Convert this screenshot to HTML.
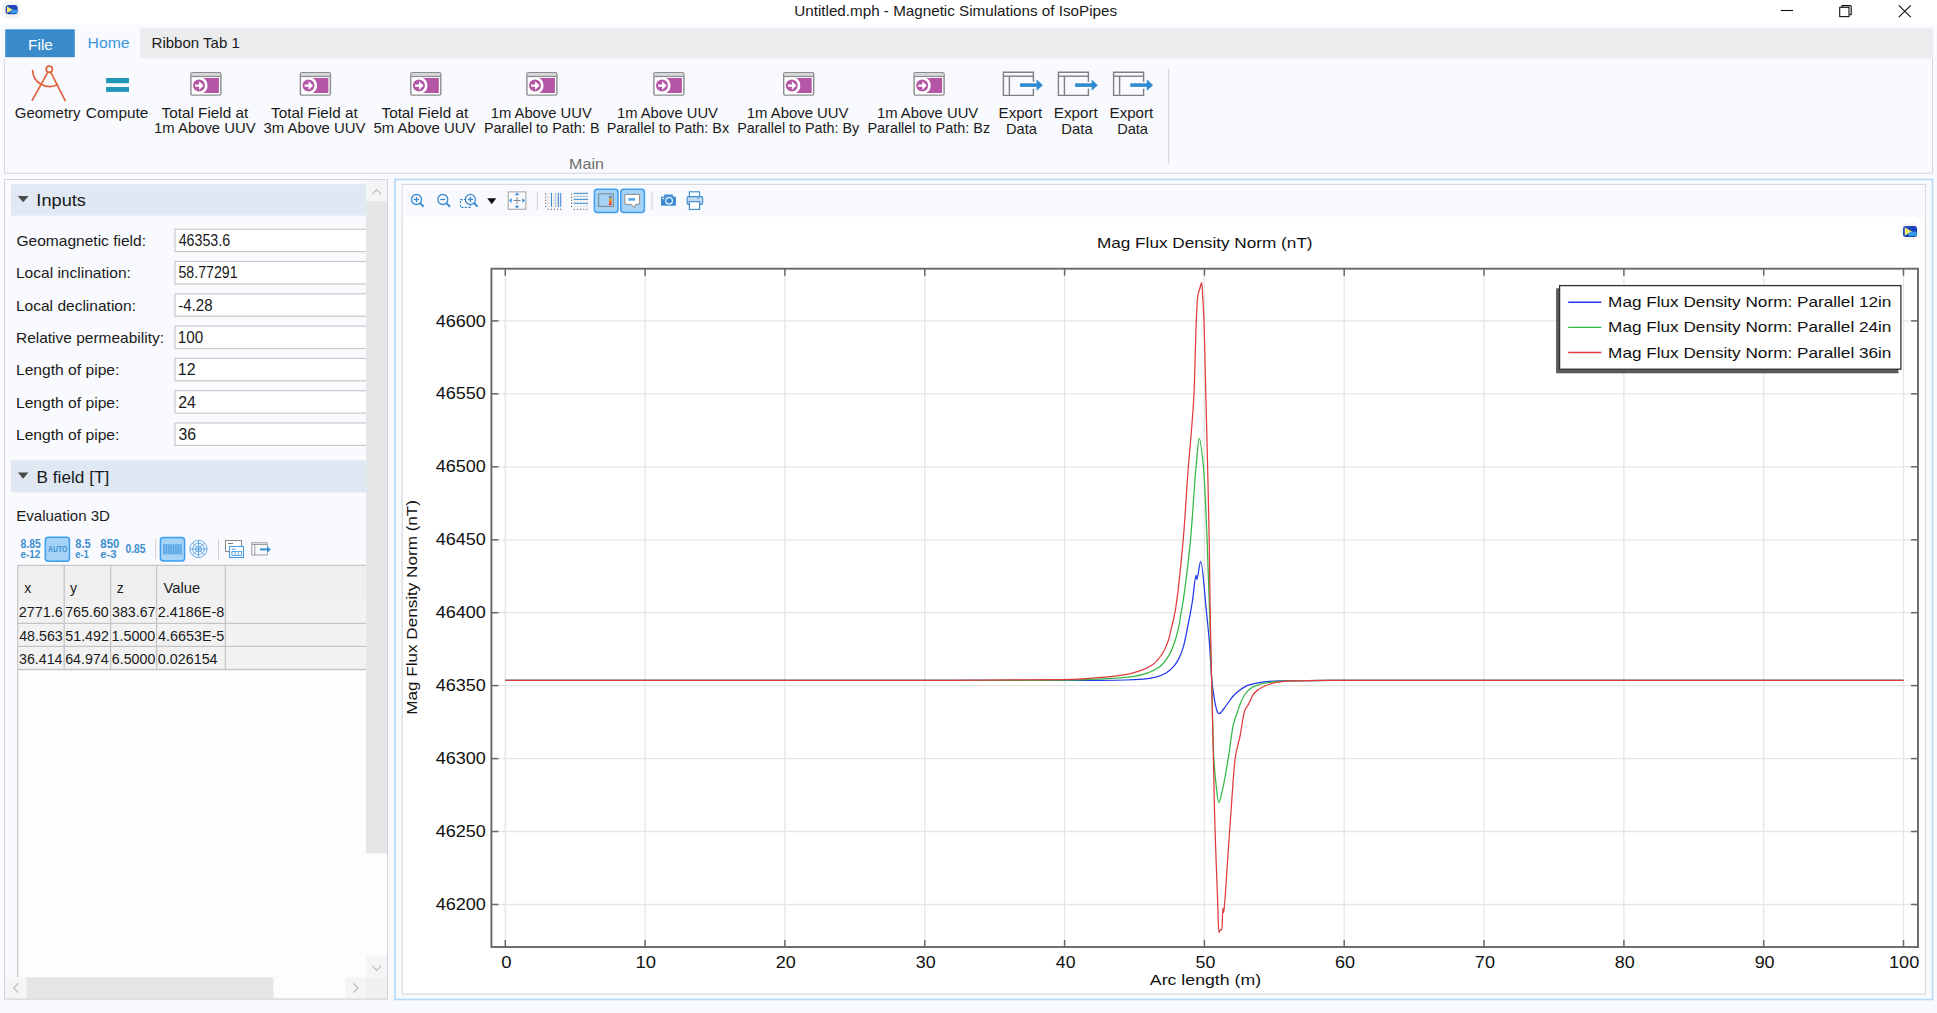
<!DOCTYPE html>
<html><head><meta charset="utf-8"><title>Untitled.mph - Magnetic Simulations of IsoPipes</title>
<style>html,body{margin:0;padding:0;background:#f9fafd;overflow:hidden}svg{display:block}text{font-family:"Liberation Sans", sans-serif}</style>
</head><body>
<svg width="1937" height="1013" viewBox="0 0 1937 1013" font-family='"Liberation Sans", sans-serif'>
<rect x="0" y="0" width="1937" height="1013" fill="#f9fafd" />
<rect x="0" y="0" width="1937" height="24.5" fill="#ffffff" />
<g transform="translate(2,1.5)"><rect x="0" y="0" width="18" height="17" rx="5" fill="#e4e4e4" opacity="0.45"/><rect x="3.6" y="3.6" width="12" height="9.2" rx="3" fill="url(#cg)"/><path d="M5 5 L11 8.2 L5 11.4 Z" fill="url(#cy)"/><path d="M8 9.6 L11 8.2 H15.4 V11 Q15.4 12 14.4 12 H8.6 Z" fill="#3aa5f0" opacity="0.9"/></g>
<text x="794.29" y="15.9" font-size="15" fill="#1a1a1a" textLength="322.8" lengthAdjust="spacingAndGlyphs" >Untitled.mph - Magnetic Simulations of IsoPipes</text>
<line x1="1780.8" y1="10.5" x2="1793" y2="10.5" stroke="#111" stroke-width="1.1" />
<rect x="1839.7" y="7.3" width="9.3" height="9.3" fill="none" stroke="#111" stroke-width="1.1" />
<path d="M1842 7.2 V5.6 H1850 Q1851.2 5.6 1851.2 6.8 V14.6 H1849.5" fill="none" stroke="#111" stroke-width="1.1" />
<line x1="1898.8" y1="5.3" x2="1910.8" y2="17.1" stroke="#111" stroke-width="1.1" />
<line x1="1910.8" y1="5.3" x2="1898.8" y2="17.1" stroke="#111" stroke-width="1.1" />
<rect x="140.2" y="28" width="1792.8" height="30.3" fill="#ebecee" />
<rect x="5.2" y="29.3" width="69.6" height="27.9" fill="#3a8bcc" />
<text x="28.07" y="50" font-size="15" fill="#ffffff" textLength="24.82" lengthAdjust="spacingAndGlyphs" >File</text>
<text x="87.54" y="48.2" font-size="15" fill="#3d98dd" textLength="42.11" lengthAdjust="spacingAndGlyphs" >Home</text>
<text x="151.6" y="48.2" font-size="15" fill="#1a1a1a" textLength="88.19" lengthAdjust="spacingAndGlyphs" >Ribbon Tab 1</text>
<path d="M4.5 58.3 V173.3 H1932.5 V58.3" fill="none" stroke="#d6d7d9" stroke-width="1" />
<g fill="none" stroke="#e0653f" stroke-width="1.7" stroke-linecap="round"><circle cx="49.3" cy="69.3" r="3.1"/><path d="M47.9 72.2 L32.2 100.3"/><path d="M50.7 72.2 L65.2 100.6"/><path d="M32.6 70.6 A16.8 16.8 0 0 0 57.6 84.4"/></g>
<rect x="106.1" y="78" width="22.9" height="5.2" fill="#2096b8" />
<rect x="106.1" y="87" width="22.9" height="4.9" fill="#2096b8" />
<g transform="translate(190.2,71.9)"><rect x="0.7" y="0.7" width="30" height="22.5" rx="1.6" fill="#ffffff" stroke="#8b8d90" stroke-width="1.4"/><rect x="1.4" y="1.4" width="28.6" height="3.3" fill="#d5d6d8"/><line x1="0.7" y1="4.6" x2="30.7" y2="4.6" stroke="#8b8d90" stroke-width="1.2"/><path d="M12.8 6.2 H28.7 V21.1 H13 A8.5 8.5 0 0 0 12.8 6.2 Z" fill="#b455a6"/><circle cx="8.8" cy="13.7" r="6" fill="#b455a6"/><path d="M4.9 12.5 H8.9 V9.4 L13.4 13.7 L8.9 18 V14.9 H4.9 Z" fill="#ffffff"/></g>
<g transform="translate(299.7,71.9)"><rect x="0.7" y="0.7" width="30" height="22.5" rx="1.6" fill="#ffffff" stroke="#8b8d90" stroke-width="1.4"/><rect x="1.4" y="1.4" width="28.6" height="3.3" fill="#d5d6d8"/><line x1="0.7" y1="4.6" x2="30.7" y2="4.6" stroke="#8b8d90" stroke-width="1.2"/><path d="M12.8 6.2 H28.7 V21.1 H13 A8.5 8.5 0 0 0 12.8 6.2 Z" fill="#b455a6"/><circle cx="8.8" cy="13.7" r="6" fill="#b455a6"/><path d="M4.9 12.5 H8.9 V9.4 L13.4 13.7 L8.9 18 V14.9 H4.9 Z" fill="#ffffff"/></g>
<g transform="translate(410.1,71.9)"><rect x="0.7" y="0.7" width="30" height="22.5" rx="1.6" fill="#ffffff" stroke="#8b8d90" stroke-width="1.4"/><rect x="1.4" y="1.4" width="28.6" height="3.3" fill="#d5d6d8"/><line x1="0.7" y1="4.6" x2="30.7" y2="4.6" stroke="#8b8d90" stroke-width="1.2"/><path d="M12.8 6.2 H28.7 V21.1 H13 A8.5 8.5 0 0 0 12.8 6.2 Z" fill="#b455a6"/><circle cx="8.8" cy="13.7" r="6" fill="#b455a6"/><path d="M4.9 12.5 H8.9 V9.4 L13.4 13.7 L8.9 18 V14.9 H4.9 Z" fill="#ffffff"/></g>
<g transform="translate(526.2,71.9)"><rect x="0.7" y="0.7" width="30" height="22.5" rx="1.6" fill="#ffffff" stroke="#8b8d90" stroke-width="1.4"/><rect x="1.4" y="1.4" width="28.6" height="3.3" fill="#d5d6d8"/><line x1="0.7" y1="4.6" x2="30.7" y2="4.6" stroke="#8b8d90" stroke-width="1.2"/><path d="M12.8 6.2 H28.7 V21.1 H13 A8.5 8.5 0 0 0 12.8 6.2 Z" fill="#b455a6"/><circle cx="8.8" cy="13.7" r="6" fill="#b455a6"/><path d="M4.9 12.5 H8.9 V9.4 L13.4 13.7 L8.9 18 V14.9 H4.9 Z" fill="#ffffff"/></g>
<g transform="translate(653.2,71.9)"><rect x="0.7" y="0.7" width="30" height="22.5" rx="1.6" fill="#ffffff" stroke="#8b8d90" stroke-width="1.4"/><rect x="1.4" y="1.4" width="28.6" height="3.3" fill="#d5d6d8"/><line x1="0.7" y1="4.6" x2="30.7" y2="4.6" stroke="#8b8d90" stroke-width="1.2"/><path d="M12.8 6.2 H28.7 V21.1 H13 A8.5 8.5 0 0 0 12.8 6.2 Z" fill="#b455a6"/><circle cx="8.8" cy="13.7" r="6" fill="#b455a6"/><path d="M4.9 12.5 H8.9 V9.4 L13.4 13.7 L8.9 18 V14.9 H4.9 Z" fill="#ffffff"/></g>
<g transform="translate(783.0,71.9)"><rect x="0.7" y="0.7" width="30" height="22.5" rx="1.6" fill="#ffffff" stroke="#8b8d90" stroke-width="1.4"/><rect x="1.4" y="1.4" width="28.6" height="3.3" fill="#d5d6d8"/><line x1="0.7" y1="4.6" x2="30.7" y2="4.6" stroke="#8b8d90" stroke-width="1.2"/><path d="M12.8 6.2 H28.7 V21.1 H13 A8.5 8.5 0 0 0 12.8 6.2 Z" fill="#b455a6"/><circle cx="8.8" cy="13.7" r="6" fill="#b455a6"/><path d="M4.9 12.5 H8.9 V9.4 L13.4 13.7 L8.9 18 V14.9 H4.9 Z" fill="#ffffff"/></g>
<g transform="translate(913.4,71.9)"><rect x="0.7" y="0.7" width="30" height="22.5" rx="1.6" fill="#ffffff" stroke="#8b8d90" stroke-width="1.4"/><rect x="1.4" y="1.4" width="28.6" height="3.3" fill="#d5d6d8"/><line x1="0.7" y1="4.6" x2="30.7" y2="4.6" stroke="#8b8d90" stroke-width="1.2"/><path d="M12.8 6.2 H28.7 V21.1 H13 A8.5 8.5 0 0 0 12.8 6.2 Z" fill="#b455a6"/><circle cx="8.8" cy="13.7" r="6" fill="#b455a6"/><path d="M4.9 12.5 H8.9 V9.4 L13.4 13.7 L8.9 18 V14.9 H4.9 Z" fill="#ffffff"/></g>
<g transform="translate(1003.4,72.3)" fill="none" stroke="#7d7f83" stroke-width="1.4"><path d="M30 9.5 V0 H0 V23.1 H30 V16.5"/><line x1="0" y1="3.9" x2="30" y2="3.9"/><line x1="6" y1="3.9" x2="6" y2="23.1"/></g>
<g transform="translate(1003.4,72.3)" fill="#2f8ad0"><rect x="16.7" y="11" width="17" height="3.6"/><path d="M33.2 7.2 L39.5 12.9 L33.2 18.4 Z"/></g>
<g transform="translate(1058.4,72.3)" fill="none" stroke="#7d7f83" stroke-width="1.4"><path d="M30 9.5 V0 H0 V23.1 H30 V16.5"/><line x1="0" y1="3.9" x2="30" y2="3.9"/><line x1="6" y1="3.9" x2="6" y2="23.1"/></g>
<g transform="translate(1058.4,72.3)" fill="#2f8ad0"><rect x="16.7" y="11" width="17" height="3.6"/><path d="M33.2 7.2 L39.5 12.9 L33.2 18.4 Z"/></g>
<g transform="translate(1113.6,72.3)" fill="none" stroke="#7d7f83" stroke-width="1.4"><path d="M30 9.5 V0 H0 V23.1 H30 V16.5"/><line x1="0" y1="3.9" x2="30" y2="3.9"/><line x1="6" y1="3.9" x2="6" y2="23.1"/></g>
<g transform="translate(1113.6,72.3)" fill="#2f8ad0"><rect x="16.7" y="11" width="17" height="3.6"/><path d="M33.2 7.2 L39.5 12.9 L33.2 18.4 Z"/></g>
<text x="14.8" y="117.8" font-size="15" fill="#1a1a1a" textLength="65.75" lengthAdjust="spacingAndGlyphs" >Geometry</text>
<text x="85.88" y="117.8" font-size="15" fill="#1a1a1a" textLength="62.5" lengthAdjust="spacingAndGlyphs" >Compute</text>
<text x="161.59" y="117.8" font-size="15" fill="#1a1a1a" textLength="86.55" lengthAdjust="spacingAndGlyphs" >Total Field at</text>
<text x="154.02" y="133.4" font-size="15" fill="#1a1a1a" textLength="101.65" lengthAdjust="spacingAndGlyphs" >1m Above UUV</text>
<text x="271.09" y="117.8" font-size="15" fill="#1a1a1a" textLength="86.65" lengthAdjust="spacingAndGlyphs" >Total Field at</text>
<text x="263.51" y="133.4" font-size="15" fill="#1a1a1a" textLength="102.07" lengthAdjust="spacingAndGlyphs" >3m Above UUV</text>
<text x="381.49" y="117.8" font-size="15" fill="#1a1a1a" textLength="86.65" lengthAdjust="spacingAndGlyphs" >Total Field at</text>
<text x="373.41" y="133.4" font-size="15" fill="#1a1a1a" textLength="102.07" lengthAdjust="spacingAndGlyphs" >5m Above UUV</text>
<text x="490.72" y="117.8" font-size="15" fill="#1a1a1a" textLength="101.05" lengthAdjust="spacingAndGlyphs" >1m Above UUV</text>
<text x="483.94" y="133.4" font-size="15" fill="#1a1a1a" textLength="115.59" lengthAdjust="spacingAndGlyphs" >Parallel to Path: B</text>
<text x="616.92" y="117.8" font-size="15" fill="#1a1a1a" textLength="101.05" lengthAdjust="spacingAndGlyphs" >1m Above UUV</text>
<text x="606.65" y="133.4" font-size="15" fill="#1a1a1a" textLength="122.51" lengthAdjust="spacingAndGlyphs" >Parallel to Path: Bx</text>
<text x="746.72" y="117.8" font-size="15" fill="#1a1a1a" textLength="101.76" lengthAdjust="spacingAndGlyphs" >1m Above UUV</text>
<text x="737.25" y="133.4" font-size="15" fill="#1a1a1a" textLength="122.01" lengthAdjust="spacingAndGlyphs" >Parallel to Path: By</text>
<text x="876.92" y="117.8" font-size="15" fill="#1a1a1a" textLength="101.35" lengthAdjust="spacingAndGlyphs" >1m Above UUV</text>
<text x="867.45" y="133.4" font-size="15" fill="#1a1a1a" textLength="122.69" lengthAdjust="spacingAndGlyphs" >Parallel to Path: Bz</text>
<text x="998.59" y="117.8" font-size="15" fill="#1a1a1a" textLength="43.56" lengthAdjust="spacingAndGlyphs" >Export</text>
<text x="1006.03" y="133.6" font-size="15" fill="#1a1a1a" textLength="30.85" lengthAdjust="spacingAndGlyphs" >Data</text>
<text x="1053.89" y="117.8" font-size="15" fill="#1a1a1a" textLength="43.87" lengthAdjust="spacingAndGlyphs" >Export</text>
<text x="1061.31" y="133.6" font-size="15" fill="#1a1a1a" textLength="31.37" lengthAdjust="spacingAndGlyphs" >Data</text>
<text x="1109.59" y="117.8" font-size="15" fill="#1a1a1a" textLength="43.66" lengthAdjust="spacingAndGlyphs" >Export</text>
<text x="1117.13" y="133.6" font-size="15" fill="#1a1a1a" textLength="30.85" lengthAdjust="spacingAndGlyphs" >Data</text>
<text x="569.12" y="168.8" font-size="15" fill="#6d6d6d" textLength="34.76" lengthAdjust="spacingAndGlyphs" >Main</text>
<line x1="1168.6" y1="69" x2="1168.6" y2="163.2" stroke="#d3d3d3" stroke-width="1" />
<rect x="4.5" y="179.5" width="383" height="819.5" fill="#fdfdfe" stroke="#d4d5d7" stroke-width="1" />
<rect x="5" y="180" width="361" height="798" fill="#f9fafd" />
<rect x="11" y="184.2" width="355" height="31.4" fill="#dfe8f3" />
<path d="M17.7 196 H28.6 L23.15 202.3 Z" fill="#4a4a4a" />
<text x="36.39" y="206.4" font-size="17" fill="#1a1a1a" textLength="49.57" lengthAdjust="spacingAndGlyphs" >Inputs</text>
<text x="16.47" y="246.1" font-size="15" fill="#1a1a1a" textLength="129.54" lengthAdjust="spacingAndGlyphs" >Geomagnetic field:</text>
<rect x="175" y="229.2" width="200" height="22.4" fill="#ffffff" stroke="#c9c9c9" stroke-width="1.2" />
<text x="178.64" y="246.1" font-size="16" fill="#1a1a1a" textLength="51.52" lengthAdjust="spacingAndGlyphs" >46353.6</text>
<text x="15.96" y="278.4" font-size="15" fill="#1a1a1a" textLength="114.9" lengthAdjust="spacingAndGlyphs" >Local inclination:</text>
<rect x="175" y="261.5" width="200" height="22.4" fill="#ffffff" stroke="#c9c9c9" stroke-width="1.2" />
<text x="178.47" y="278.4" font-size="16" fill="#1a1a1a" textLength="59.18" lengthAdjust="spacingAndGlyphs" >58.77291</text>
<text x="15.96" y="310.7" font-size="15" fill="#1a1a1a" textLength="120.0" lengthAdjust="spacingAndGlyphs" >Local declination:</text>
<rect x="175" y="293.79999999999995" width="200" height="22.4" fill="#ffffff" stroke="#c9c9c9" stroke-width="1.2" />
<text x="178.34" y="310.7" font-size="16" fill="#1a1a1a" textLength="34.18" lengthAdjust="spacingAndGlyphs" >-4.28</text>
<text x="15.96" y="343.0" font-size="15" fill="#1a1a1a" textLength="148.08" lengthAdjust="spacingAndGlyphs" >Relative permeability:</text>
<rect x="175" y="326.09999999999997" width="200" height="22.4" fill="#ffffff" stroke="#c9c9c9" stroke-width="1.2" />
<text x="177.86" y="343.0" font-size="16" fill="#1a1a1a" textLength="25.41" lengthAdjust="spacingAndGlyphs" >100</text>
<text x="15.95" y="375.29999999999995" font-size="15" fill="#1a1a1a" textLength="103.46" lengthAdjust="spacingAndGlyphs" >Length of pipe:</text>
<rect x="175" y="358.4" width="200" height="22.4" fill="#ffffff" stroke="#c9c9c9" stroke-width="1.2" />
<text x="177.81" y="375.29999999999995" font-size="16" fill="#1a1a1a" textLength="17.68" lengthAdjust="spacingAndGlyphs" >12</text>
<text x="15.95" y="407.6" font-size="15" fill="#1a1a1a" textLength="103.46" lengthAdjust="spacingAndGlyphs" >Length of pipe:</text>
<rect x="175" y="390.7" width="200" height="22.4" fill="#ffffff" stroke="#c9c9c9" stroke-width="1.2" />
<text x="178.21" y="407.6" font-size="16" fill="#1a1a1a" textLength="17.58" lengthAdjust="spacingAndGlyphs" >24</text>
<text x="15.95" y="439.9" font-size="15" fill="#1a1a1a" textLength="103.46" lengthAdjust="spacingAndGlyphs" >Length of pipe:</text>
<rect x="175" y="423.0" width="200" height="22.4" fill="#ffffff" stroke="#c9c9c9" stroke-width="1.2" />
<text x="178.41" y="439.9" font-size="16" fill="#1a1a1a" textLength="17.58" lengthAdjust="spacingAndGlyphs" >36</text>
<rect x="11" y="460.3" width="355" height="32.2" fill="#dfe8f3" />
<path d="M17.9 472.6 H28.4 L23.15 478.8 Z" fill="#4a4a4a" />
<text x="36.58" y="483.3" font-size="17" fill="#1a1a1a" textLength="72.63" lengthAdjust="spacingAndGlyphs" >B field [T]</text>
<text x="16.19" y="520.8" font-size="15" fill="#1a1a1a" textLength="93.8" lengthAdjust="spacingAndGlyphs" >Evaluation 3D</text>
<text x="20.55" y="547.7" font-size="12" fill="#3d8fd0" textLength="20.15" lengthAdjust="spacingAndGlyphs" font-weight="bold" >8.85</text>
<text x="20.54" y="557.8" font-size="11" fill="#3d8fd0" textLength="19.84" lengthAdjust="spacingAndGlyphs" font-weight="bold" >e-12</text>
<rect x="45.3" y="537.2" width="24.2" height="24.1" fill="#a5d3f7" stroke="#3d9ef0" stroke-width="1.5" rx="3" />
<text x="48.04" y="552.2" font-size="8.3" fill="#3d8fd0" textLength="19.27" lengthAdjust="spacingAndGlyphs" font-weight="bold" >AUTO</text>
<text x="75.23" y="547.7" font-size="12" fill="#3d8fd0" textLength="15.42" lengthAdjust="spacingAndGlyphs" font-weight="bold" >8.5</text>
<text x="75.26" y="557.8" font-size="11" fill="#3d8fd0" textLength="13.6" lengthAdjust="spacingAndGlyphs" font-weight="bold" >e-1</text>
<text x="100.32" y="547.7" font-size="12" fill="#3d8fd0" textLength="18.97" lengthAdjust="spacingAndGlyphs" font-weight="bold" >850</text>
<text x="100.29" y="557.8" font-size="11" fill="#3d8fd0" textLength="16.32" lengthAdjust="spacingAndGlyphs" font-weight="bold" >e-3</text>
<text x="125.4" y="552.9" font-size="12.8" fill="#3d8fd0" textLength="20.16" lengthAdjust="spacingAndGlyphs" font-weight="bold" >0.85</text>
<line x1="155.7" y1="539" x2="155.7" y2="559.2" stroke="#cfcfcf" stroke-width="1" />
<rect x="160.4" y="537.5" width="24.2" height="23.6" fill="#a5d3f7" stroke="#3d9ef0" stroke-width="1.5" rx="3" />
<g fill="#4a9de0" opacity="0.85"><rect x="163.3" y="544.5" width="1.4" height="10"/><rect x="165.7" y="544.5" width="1.4" height="10"/><rect x="168.1" y="544.5" width="1.4" height="10"/><rect x="170.5" y="544.5" width="1.4" height="10"/><rect x="172.9" y="544.5" width="1.4" height="10"/><rect x="175.3" y="544.5" width="1.4" height="10"/><rect x="177.7" y="544.5" width="1.4" height="10"/><rect x="180.1" y="544.5" width="1.4" height="10"/><rect x="163" y="544" width="19" height="10" fill="#4a9de0" opacity="0.45"/></g>
<g fill="none" stroke="#5aa3e0" stroke-width="0.9"><circle cx="198.5" cy="549" r="8.6"/><circle cx="198.5" cy="549" r="5.8"/><circle cx="198.5" cy="549" r="3"/><line x1="198.5" y1="540.4" x2="198.5" y2="557.6"/><line x1="189.9" y1="549" x2="207.1" y2="549"/><line x1="192.4" y1="542.9" x2="204.6" y2="555.1"/><line x1="204.6" y1="542.9" x2="192.4" y2="555.1"/></g>
<line x1="218.5" y1="539" x2="218.5" y2="559.2" stroke="#cfcfcf" stroke-width="1" />
<g><rect x="225.5" y="540.5" width="16" height="11" fill="#fff" stroke="#8a8a8a" stroke-width="1"/><line x1="228" y1="543.5" x2="233" y2="543.5" stroke="#777" stroke-width="1"/><rect x="229.5" y="546.5" width="14" height="11" fill="#fff" stroke="#4a9de0" stroke-width="1.1"/><line x1="232" y1="549.3" x2="235.5" y2="549.3" stroke="#4a9de0" stroke-width="1"/><rect x="232" y="551.5" width="9.5" height="4" fill="none" stroke="#4a9de0" stroke-width="0.9"/><line x1="235.2" y1="551.5" x2="235.2" y2="555.5" stroke="#4a9de0" stroke-width="0.8"/><line x1="238.4" y1="551.5" x2="238.4" y2="555.5" stroke="#4a9de0" stroke-width="0.8"/></g>
<g fill="none" stroke="#9a9a9a" stroke-width="1"><path d="M267.3 546 V542.8 H251.8 V555 H267.3 V553"/><line x1="251.8" y1="544.5" x2="267.3" y2="544.5"/><line x1="254.8" y1="544.5" x2="254.8" y2="555"/></g><rect x="260" y="548.4" width="7.5" height="2" fill="#3d8fd0"/><path d="M267 545.7 L270.7 549.4 L267 553 Z" fill="#3d8fd0"/>
<rect x="17.7" y="565.9" width="348.3" height="35" fill="#efefef" />
<rect x="17.7" y="600.9" width="348.3" height="68.6" fill="#f2f2f2" />
<rect x="18.2" y="670" width="348" height="307" fill="#fdfdfe" />
<line x1="17.7" y1="565.4" x2="366" y2="565.4" stroke="#c5c5c5" stroke-width="1.2" />
<line x1="17.7" y1="565.4" x2="17.7" y2="977.4" stroke="#c5c5c5" stroke-width="1.2" />
<line x1="17.7" y1="623.4" x2="366" y2="623.4" stroke="#c5c5c5" stroke-width="1.3" />
<line x1="17.7" y1="646.4" x2="366" y2="646.4" stroke="#c5c5c5" stroke-width="1.3" />
<line x1="17.7" y1="669.5" x2="366" y2="669.5" stroke="#c5c5c5" stroke-width="1.3" />
<line x1="64.2" y1="565.4" x2="64.2" y2="669.5" stroke="#c5c5c5" stroke-width="1.3" />
<line x1="110.6" y1="565.4" x2="110.6" y2="669.5" stroke="#c5c5c5" stroke-width="1.3" />
<line x1="156.6" y1="565.4" x2="156.6" y2="669.5" stroke="#c5c5c5" stroke-width="1.3" />
<line x1="225.4" y1="565.4" x2="225.4" y2="669.5" stroke="#c5c5c5" stroke-width="1.3" />
<text x="24.2" y="592.6" font-size="14" fill="#1a1a1a" >x</text>
<text x="70.1" y="592.6" font-size="14" fill="#1a1a1a" >y</text>
<text x="116.8" y="592.6" font-size="14" fill="#1a1a1a" >z</text>
<text x="163.59" y="592.6" font-size="14" fill="#1a1a1a" textLength="36.61" lengthAdjust="spacingAndGlyphs" >Value</text>
<text x="18.78" y="617.4" font-size="14" fill="#1a1a1a" textLength="43.96" lengthAdjust="spacingAndGlyphs" >2771.6</text>
<text x="65.19" y="617.4" font-size="14" fill="#1a1a1a" textLength="43.54" lengthAdjust="spacingAndGlyphs" >765.60</text>
<text x="112.09" y="617.4" font-size="14" fill="#1a1a1a" textLength="43.44" lengthAdjust="spacingAndGlyphs" >383.67</text>
<text x="157.68" y="617.4" font-size="14" fill="#1a1a1a" textLength="66.65" lengthAdjust="spacingAndGlyphs" >2.4186E-8</text>
<text x="19.19" y="640.6" font-size="14" fill="#1a1a1a" textLength="43.54" lengthAdjust="spacingAndGlyphs" >48.563</text>
<text x="65.29" y="640.6" font-size="14" fill="#1a1a1a" textLength="43.65" lengthAdjust="spacingAndGlyphs" >51.492</text>
<text x="111.47" y="640.6" font-size="14" fill="#1a1a1a" textLength="43.86" lengthAdjust="spacingAndGlyphs" >1.5000</text>
<text x="158.09" y="640.6" font-size="14" fill="#1a1a1a" textLength="66.23" lengthAdjust="spacingAndGlyphs" >4.6653E-5</text>
<text x="18.99" y="663.8" font-size="14" fill="#1a1a1a" textLength="43.54" lengthAdjust="spacingAndGlyphs" >36.414</text>
<text x="65.19" y="663.8" font-size="14" fill="#1a1a1a" textLength="43.44" lengthAdjust="spacingAndGlyphs" >64.974</text>
<text x="111.89" y="663.8" font-size="14" fill="#1a1a1a" textLength="43.44" lengthAdjust="spacingAndGlyphs" >6.5000</text>
<text x="157.89" y="663.8" font-size="14" fill="#1a1a1a" textLength="59.71" lengthAdjust="spacingAndGlyphs" >0.026154</text>
<rect x="366.1" y="180" width="21.2" height="797.4" fill="#fdfdfe" />
<rect x="366.1" y="180" width="21.2" height="21.1" fill="#f4f5f7" />
<rect x="366.1" y="201.1" width="21.2" height="652.4" fill="#e4e5e7" />
<rect x="366.1" y="956.4" width="21.2" height="21" fill="#f4f5f7" />
<path d="M372.2 194.3 L376.6 189.8 L381 194.3" fill="none" stroke="#c3c3c3" stroke-width="1.4" />
<path d="M372.2 965.6 L376.6 970.4 L381 965.6" fill="none" stroke="#c3c3c3" stroke-width="1.4" />
<rect x="5" y="977.4" width="361.1" height="21.1" fill="#fdfdfe" />
<rect x="5" y="977.4" width="21.3" height="21.1" fill="#f4f5f7" />
<rect x="26.3" y="977.4" width="247.1" height="21.1" fill="#e4e5e7" />
<rect x="345" y="977.4" width="21.1" height="21.1" fill="#f4f5f7" />
<rect x="366.1" y="977.4" width="21.2" height="21.1" fill="#f0f0f0" />
<path d="M18.2 983.3 L13.8 987.9 L18.2 992.5" fill="none" stroke="#c3c3c3" stroke-width="1.4" />
<path d="M353.6 983.3 L358 987.9 L353.6 992.5" fill="none" stroke="#c3c3c3" stroke-width="1.4" />
<path d="M4.5 179.5 H387.5 V999 H4.5 Z" fill="none" stroke="#d4d5d7" stroke-width="1" />
<rect x="395" y="179.5" width="1537.5" height="820" fill="#f9fafd" stroke="#b3d8f8" stroke-width="1.6" />
<rect x="402.2" y="184.5" width="1523.3" height="809.7" fill="#ffffff" stroke="#d9d9d9" stroke-width="1.2" />
<rect x="402.8" y="185.1" width="1522.1" height="31.6" fill="#f9fafd" />
<g fill="none" stroke="#3b8bd3" stroke-width="1.3"><circle cx="416.5" cy="199.5" r="5"/><line x1="420.1" y1="203.1" x2="423.7" y2="206.7" stroke-width="2"/><line x1="413.9" y1="199.5" x2="419.1" y2="199.5"/><line x1="416.5" y1="196.9" x2="416.5" y2="202.1"/></g>
<g fill="none" stroke="#3b8bd3" stroke-width="1.3"><circle cx="442.8" cy="199.5" r="5"/><line x1="446.40000000000003" y1="203.1" x2="450.0" y2="206.7" stroke-width="2"/><line x1="440.2" y1="199.5" x2="445.40000000000003" y2="199.5"/></g>
<rect x="460.5" y="199.6" width="9.8" height="7.8" fill="none" stroke="#3b8bd3" stroke-width="1.1" stroke-dasharray="2.2,1.3"/>
<circle cx="470.4" cy="199.4" r="4.9" fill="#f9fafd"/>
<g fill="none" stroke="#3b8bd3" stroke-width="1.3"><circle cx="470.4" cy="199.4" r="5"/><line x1="474.0" y1="203.0" x2="477.59999999999997" y2="206.6" stroke-width="2"/><line x1="467.79999999999995" y1="199.4" x2="473.0" y2="199.4"/><line x1="470.4" y1="196.8" x2="470.4" y2="202.0"/></g>
<path d="M487.2 198.3 H496.3 L491.75 204.2 Z" fill="#111" />
<rect x="508.2" y="191.9" width="17.7" height="17.4" fill="none" stroke="#a9a9a9" stroke-width="1.1"/>
<g stroke="#8a8a8a" stroke-width="1"><line x1="513.4" y1="200.5" x2="520.6" y2="200.5"/><line x1="517" y1="197" x2="517" y2="204"/></g>
<g fill="#3b8bd3"><path d="M517 192.6 L514.6 195.3 H519.4 Z"/><path d="M517 208.4 L514.6 205.7 H519.4 Z"/><path d="M509 200.5 L511.7 198.1 V202.9 Z"/><path d="M525 200.5 L522.3 198.1 V202.9 Z"/></g>
<line x1="537.4" y1="191.5" x2="537.4" y2="210" stroke="#cfcfcf" stroke-width="1" />
<g fill="#6d6d6d"><rect x="545.1" y="193.4" width="1.2" height="1.2"/><rect x="545.1" y="196.7" width="1.2" height="1.2"/><rect x="545.1" y="199.7" width="1.2" height="1.2"/><rect x="545.1" y="202.7" width="1.2" height="1.2"/><rect x="545.1" y="206.0" width="1.2" height="1.2"/><rect x="547.5" y="208.7" width="1.2" height="1.2"/><rect x="550.7" y="208.7" width="1.2" height="1.2"/><rect x="553.8" y="208.7" width="1.2" height="1.2"/><rect x="557.0" y="208.7" width="1.2" height="1.2"/><rect x="560.1" y="208.7" width="1.2" height="1.2"/></g>
<g stroke="#dedede" stroke-width="0.8"><line x1="548.1" y1="193" x2="548.1" y2="206.8"/><line x1="554.4" y1="193" x2="554.4" y2="206.8"/><line x1="557.6" y1="193" x2="557.6" y2="206.8"/><line x1="548" y1="194" x2="561.5" y2="194"/><line x1="548" y1="197.3" x2="561.5" y2="197.3"/><line x1="548" y1="200.3" x2="561.5" y2="200.3"/><line x1="548" y1="203.3" x2="561.5" y2="203.3"/><line x1="548" y1="206.6" x2="561.5" y2="206.6"/></g>
<g stroke="#3b8bd3" stroke-width="1"><line x1="551.5" y1="193" x2="551.5" y2="206.8"/><line x1="558.4" y1="193" x2="558.4" y2="206.8"/><line x1="560.7" y1="193" x2="560.7" y2="206.8"/></g>
<line x1="555.8" y1="193" x2="555.8" y2="206.8" stroke="#9cc4ea" stroke-width="0.9"/>
<g fill="#6d6d6d"><rect x="571.0" y="193.4" width="1.2" height="1.2"/><rect x="571.0" y="196.7" width="1.2" height="1.2"/><rect x="571.0" y="199.7" width="1.2" height="1.2"/><rect x="571.0" y="202.7" width="1.2" height="1.2"/><rect x="571.0" y="206.0" width="1.2" height="1.2"/><rect x="573.7" y="208.7" width="1.2" height="1.2"/><rect x="576.9" y="208.7" width="1.2" height="1.2"/><rect x="580.0" y="208.7" width="1.2" height="1.2"/><rect x="583.2" y="208.7" width="1.2" height="1.2"/><rect x="586.3" y="208.7" width="1.2" height="1.2"/></g>
<g stroke="#dedede" stroke-width="0.8"><line x1="574.3" y1="193" x2="574.3" y2="206.8"/><line x1="577.5" y1="193" x2="577.5" y2="206.8"/><line x1="580.6" y1="193" x2="580.6" y2="206.8"/><line x1="583.8" y1="193" x2="583.8" y2="206.8"/><line x1="586.9" y1="193" x2="586.9" y2="206.8"/></g>
<g stroke="#3b8bd3" stroke-width="1"><line x1="573.8" y1="193.3" x2="588" y2="193.3"/><line x1="573.8" y1="199.4" x2="588" y2="199.4"/><line x1="573.8" y1="203.3" x2="588" y2="203.3"/></g>
<line x1="573.8" y1="196.4" x2="588" y2="196.4" stroke="#9cc4ea" stroke-width="0.9"/>
<line x1="573.8" y1="206.6" x2="588" y2="206.6" stroke="#dedede" stroke-width="0.8"/>
<rect x="594.4" y="189.3" width="23.6" height="23.2" fill="#a5d3f7" stroke="#3d9ef0" stroke-width="1.5" rx="3" />
<rect x="598.6" y="193.8" width="14.8" height="12.6" fill="none" stroke="#7f8b96" stroke-width="1.1" />
<linearGradient id="cb" x1="0" y1="0" x2="0" y2="1"><stop offset="0" stop-color="#3b7fd3"/><stop offset="0.45" stop-color="#f0a030"/><stop offset="1" stop-color="#e8323c"/></linearGradient>
<rect x="608.9" y="195.8" width="2.9" height="9.3" fill="url(#cb)" />
<rect x="620.8" y="189.3" width="23.6" height="23.2" fill="#a5d3f7" stroke="#3d9ef0" stroke-width="1.5" rx="3" />
<path d="M624.9 194.4 H639.6 V204.3 H635.5 L634.8 207.7 L631 204.3 H624.9 Z" fill="#ffffff" stroke="#8a8a8a" stroke-width="1" />
<rect x="628.3" y="198.1" width="6.8" height="2.6" fill="#5aa3e0" />
<line x1="652" y1="191.5" x2="652" y2="210" stroke="#cfcfcf" stroke-width="1" />
<g fill="#3b8bd3"><rect x="661" y="196.6" width="14.9" height="9.1"/><path d="M663.6 196.8 L664.6 194.6 H672.6 L673.6 196.8 Z"/></g><circle cx="669.1" cy="200.8" r="3.3" fill="none" stroke="#ffffff" stroke-width="1.1"/><rect x="662.6" y="197.7" width="1.6" height="1.4" fill="#ffffff"/>
<g stroke="#3b8bd3" stroke-width="1.1"><rect x="689.4" y="191.8" width="10.2" height="5" fill="#ffffff"/><rect x="687.2" y="196.6" width="15.4" height="7.8" rx="1.2" fill="#c3daf2"/><rect x="689.4" y="201.6" width="10.2" height="7.8" fill="#ffffff"/></g><rect x="697.2" y="197.6" width="1.6" height="1" fill="#3b8bd3"/>
<linearGradient id="cg" x1="0" y1="0" x2="1" y2="1"><stop offset="0" stop-color="#2a4fd0"/><stop offset="0.6" stop-color="#1a3fb8"/><stop offset="1" stop-color="#0a1f80"/></linearGradient><linearGradient id="cy" x1="0" y1="0" x2="1" y2="0"><stop offset="0" stop-color="#fff070"/><stop offset="1" stop-color="#c8e060"/></linearGradient>
<g transform="translate(1901,223)"><rect x="0" y="0.5" width="17" height="16" rx="4" fill="#e6e6e6" opacity="0.45" transform="rotate(-10 8.5 8.5)"/><rect x="2" y="3" width="14" height="11" rx="3" fill="url(#cg)"/><path d="M3.8 4.6 L11.2 8.5 L3.8 12.5 Z" fill="url(#cy)"/><path d="M7 10.2 L11.2 8.5 H15.6 V12.5 Q15.6 13.2 14.5 13.2 H8 Z" fill="#3aa5f0" opacity="0.9"/></g>
<line x1="505.3" y1="268.7" x2="505.3" y2="947.0" stroke="#e6e6e6" stroke-width="1.3" />
<line x1="645.1" y1="268.7" x2="645.1" y2="947.0" stroke="#e6e6e6" stroke-width="1.3" />
<line x1="784.9" y1="268.7" x2="784.9" y2="947.0" stroke="#e6e6e6" stroke-width="1.3" />
<line x1="924.8" y1="268.7" x2="924.8" y2="947.0" stroke="#e6e6e6" stroke-width="1.3" />
<line x1="1064.6" y1="268.7" x2="1064.6" y2="947.0" stroke="#e6e6e6" stroke-width="1.3" />
<line x1="1204.4" y1="268.7" x2="1204.4" y2="947.0" stroke="#e6e6e6" stroke-width="1.3" />
<line x1="1344.2" y1="268.7" x2="1344.2" y2="947.0" stroke="#e6e6e6" stroke-width="1.3" />
<line x1="1484.0" y1="268.7" x2="1484.0" y2="947.0" stroke="#e6e6e6" stroke-width="1.3" />
<line x1="1623.9" y1="268.7" x2="1623.9" y2="947.0" stroke="#e6e6e6" stroke-width="1.3" />
<line x1="1763.7" y1="268.7" x2="1763.7" y2="947.0" stroke="#e6e6e6" stroke-width="1.3" />
<line x1="1903.5" y1="268.7" x2="1903.5" y2="947.0" stroke="#e6e6e6" stroke-width="1.3" />
<line x1="491.4" y1="320.9" x2="1918.0" y2="320.9" stroke="#e6e6e6" stroke-width="1.3" />
<line x1="491.4" y1="393.8" x2="1918.0" y2="393.8" stroke="#e6e6e6" stroke-width="1.3" />
<line x1="491.4" y1="466.8" x2="1918.0" y2="466.8" stroke="#e6e6e6" stroke-width="1.3" />
<line x1="491.4" y1="539.8" x2="1918.0" y2="539.8" stroke="#e6e6e6" stroke-width="1.3" />
<line x1="491.4" y1="612.7" x2="1918.0" y2="612.7" stroke="#e6e6e6" stroke-width="1.3" />
<line x1="491.4" y1="685.6" x2="1918.0" y2="685.6" stroke="#e6e6e6" stroke-width="1.3" />
<line x1="491.4" y1="758.6" x2="1918.0" y2="758.6" stroke="#e6e6e6" stroke-width="1.3" />
<line x1="491.4" y1="831.5" x2="1918.0" y2="831.5" stroke="#e6e6e6" stroke-width="1.3" />
<line x1="491.4" y1="904.5" x2="1918.0" y2="904.5" stroke="#e6e6e6" stroke-width="1.3" />
<clipPath id="pc"><rect x="491.4" y="268.7" width="1426.6" height="678.3"/></clipPath>
<g clip-path="url(#pc)" fill="none" stroke-width="1.25" stroke-linejoin="round">
<path d="M505.30 680.40 C700.20 680.40 895.10 680.40 1090.00 680.40 C1101.83 680.40 1113.67 680.23 1125.50 680.00 C1131.43 679.88 1137.37 679.57 1143.30 679.10 C1147.73 678.75 1152.17 677.97 1156.60 676.90 C1159.57 676.18 1162.53 674.93 1165.50 673.30 C1168.47 671.67 1171.43 669.13 1174.40 665.70 C1175.87 664.00 1177.33 661.50 1178.80 658.60 C1180.30 655.64 1181.80 652.05 1183.30 647.10 C1184.77 642.26 1186.23 633.86 1187.70 626.70 C1188.60 622.31 1189.50 617.83 1190.40 612.90 C1191.13 608.89 1191.87 604.68 1192.60 600.00 C1193.77 592.55 1194.93 575.10 1196.10 575.10 C1196.30 575.10 1196.50 579.50 1196.70 579.50 C1198.03 579.50 1199.37 561.60 1200.70 561.60 C1202.63 561.60 1204.57 593.99 1206.50 612.40 C1207.40 620.97 1208.30 629.33 1209.20 640.00 C1210.27 652.65 1211.33 677.63 1212.40 685.70 C1214.27 699.83 1216.13 710.77 1218.00 712.80 C1218.37 713.20 1218.73 713.60 1219.10 713.60 C1220.73 713.60 1222.37 710.44 1224.00 708.50 C1225.33 706.91 1226.67 704.81 1228.00 703.00 C1229.73 700.64 1231.47 697.89 1233.20 696.00 C1235.13 693.89 1237.07 692.10 1239.00 690.70 C1242.13 688.43 1245.27 686.25 1248.40 685.20 C1253.00 683.66 1257.60 682.63 1262.20 682.10 C1267.93 681.44 1273.67 680.88 1279.40 680.80 C1296.27 680.55 1313.13 680.45 1330.00 680.45 C1521.17 680.40 1712.33 680.42 1903.50 680.40" fill="none" stroke="#2136ee" stroke-width="1.25" />
<path d="M505.30 680.40 C670.20 680.40 835.10 680.40 1000.00 680.40 C1021.33 680.40 1042.67 680.29 1064.00 680.10 C1072.67 680.02 1081.33 679.69 1090.00 679.40 C1098.90 679.10 1107.80 678.77 1116.70 678.20 C1122.60 677.82 1128.50 677.28 1134.40 676.40 C1138.87 675.73 1143.33 674.45 1147.80 672.90 C1151.63 671.57 1155.47 669.87 1159.30 667.10 C1162.57 664.74 1165.83 660.56 1169.10 655.10 C1171.17 651.65 1173.23 646.26 1175.30 640.00 C1176.47 636.47 1177.63 632.21 1178.80 626.70 C1179.57 623.08 1180.33 617.45 1181.10 612.90 C1181.83 608.55 1182.57 604.90 1183.30 600.00 C1185.70 583.96 1188.10 564.63 1190.50 539.90 C1192.37 520.66 1194.23 485.94 1196.10 466.30 C1197.13 455.43 1198.17 438.30 1199.20 438.30 C1200.60 438.30 1202.00 452.17 1203.40 466.30 C1204.63 478.75 1205.87 510.44 1207.10 539.90 C1207.93 559.80 1208.77 586.22 1209.60 612.40 C1210.30 634.39 1211.00 659.74 1211.70 684.00 C1212.40 708.26 1213.10 745.52 1213.80 758.00 C1214.47 769.89 1215.13 775.94 1215.80 782.00 C1216.77 790.79 1217.73 802.70 1218.70 802.70 C1219.83 802.70 1220.97 796.11 1222.10 791.60 C1224.17 783.38 1226.23 770.41 1228.30 758.00 C1229.93 748.19 1231.57 732.33 1233.20 725.30 C1234.63 719.13 1236.07 715.71 1237.50 711.50 C1238.60 708.27 1239.70 705.02 1240.80 702.50 C1242.17 699.37 1243.53 696.44 1244.90 694.50 C1246.57 692.13 1248.23 690.26 1249.90 689.00 C1251.70 687.64 1253.50 686.57 1255.30 685.90 C1259.90 684.18 1264.50 683.04 1269.10 682.40 C1274.40 681.66 1279.70 681.01 1285.00 680.90 C1300.00 680.59 1315.00 680.45 1330.00 680.45 C1521.17 680.40 1712.33 680.42 1903.50 680.40" fill="none" stroke="#33b744" stroke-width="1.25" />
<path d="M505.30 680.40 C653.53 680.40 801.77 680.40 950.00 680.40 C988.00 680.40 1026.00 680.14 1064.00 679.60 C1078.60 679.39 1093.20 678.19 1107.80 676.90 C1113.70 676.38 1119.60 675.64 1125.50 674.60 C1129.97 673.81 1134.43 672.60 1138.90 671.10 C1143.33 669.62 1147.77 667.84 1152.20 664.90 C1155.17 662.93 1158.13 659.69 1161.10 655.50 C1163.47 652.16 1165.83 647.61 1168.20 640.90 C1169.37 637.59 1170.53 631.58 1171.70 626.70 C1172.77 622.24 1173.83 618.78 1174.90 612.90 C1177.67 597.66 1180.43 570.46 1183.20 539.90 C1184.93 520.75 1186.67 488.34 1188.40 466.30 C1189.43 453.16 1190.47 443.43 1191.50 430.00 C1192.33 419.17 1193.17 410.45 1194.00 393.80 C1194.77 378.48 1195.53 338.31 1196.30 320.90 C1196.73 311.06 1197.17 299.88 1197.60 297.00 C1198.30 292.34 1199.00 291.45 1199.70 289.00 C1200.37 286.66 1201.03 282.50 1201.70 282.50 C1202.00 282.50 1202.30 290.29 1202.60 295.00 C1203.07 302.33 1203.53 309.23 1204.00 320.90 C1204.60 335.91 1205.20 369.57 1205.80 393.80 C1206.40 418.03 1207.00 440.50 1207.60 466.30 C1208.13 489.24 1208.67 509.35 1209.20 539.90 C1209.53 558.99 1209.87 592.94 1210.20 612.40 C1210.70 641.58 1211.20 661.21 1211.70 684.00 C1212.27 709.83 1212.83 732.24 1213.40 758.00 C1213.77 774.67 1214.13 796.29 1214.50 810.00 C1215.53 848.64 1216.57 872.52 1217.60 900.00 C1218.03 911.52 1218.47 932.50 1218.90 932.50 C1219.43 932.50 1219.97 929.60 1220.50 929.60 C1221.00 929.60 1221.50 929.60 1222.00 929.60 C1222.27 929.60 1222.53 908.00 1222.80 908.00 C1223.07 908.00 1223.33 912.50 1223.60 912.50 C1223.93 912.50 1224.27 907.20 1224.60 903.70 C1225.57 893.54 1226.53 875.93 1227.50 862.00 C1228.70 844.71 1229.90 826.23 1231.10 810.00 C1232.47 791.52 1233.83 767.22 1235.20 758.00 C1236.80 747.20 1238.40 744.14 1240.00 736.30 C1241.63 728.30 1243.27 714.01 1244.90 710.10 C1246.07 707.31 1247.23 706.56 1248.40 704.50 C1250.23 701.27 1252.07 695.56 1253.90 693.50 C1256.67 690.39 1259.43 688.67 1262.20 687.30 C1266.80 685.02 1271.40 683.20 1276.00 682.40 C1280.60 681.60 1285.20 680.89 1289.80 680.80 C1303.20 680.55 1316.60 680.45 1330.00 680.45 C1521.17 680.40 1712.33 680.42 1903.50 680.40" fill="none" stroke="#e03a3e" stroke-width="1.25" />
</g>
<rect x="491.4" y="268.7" width="1426.6" height="678.3" fill="none" stroke="#686868" stroke-width="1.9"/>
<line x1="505.3" y1="268.7" x2="505.3" y2="275.7" stroke="#686868" stroke-width="1.5" />
<line x1="505.3" y1="940.0" x2="505.3" y2="947.0" stroke="#686868" stroke-width="1.5" />
<line x1="645.1" y1="268.7" x2="645.1" y2="275.7" stroke="#686868" stroke-width="1.5" />
<line x1="645.1" y1="940.0" x2="645.1" y2="947.0" stroke="#686868" stroke-width="1.5" />
<line x1="784.9" y1="268.7" x2="784.9" y2="275.7" stroke="#686868" stroke-width="1.5" />
<line x1="784.9" y1="940.0" x2="784.9" y2="947.0" stroke="#686868" stroke-width="1.5" />
<line x1="924.8" y1="268.7" x2="924.8" y2="275.7" stroke="#686868" stroke-width="1.5" />
<line x1="924.8" y1="940.0" x2="924.8" y2="947.0" stroke="#686868" stroke-width="1.5" />
<line x1="1064.6" y1="268.7" x2="1064.6" y2="275.7" stroke="#686868" stroke-width="1.5" />
<line x1="1064.6" y1="940.0" x2="1064.6" y2="947.0" stroke="#686868" stroke-width="1.5" />
<line x1="1204.4" y1="268.7" x2="1204.4" y2="275.7" stroke="#686868" stroke-width="1.5" />
<line x1="1204.4" y1="940.0" x2="1204.4" y2="947.0" stroke="#686868" stroke-width="1.5" />
<line x1="1344.2" y1="268.7" x2="1344.2" y2="275.7" stroke="#686868" stroke-width="1.5" />
<line x1="1344.2" y1="940.0" x2="1344.2" y2="947.0" stroke="#686868" stroke-width="1.5" />
<line x1="1484.0" y1="268.7" x2="1484.0" y2="275.7" stroke="#686868" stroke-width="1.5" />
<line x1="1484.0" y1="940.0" x2="1484.0" y2="947.0" stroke="#686868" stroke-width="1.5" />
<line x1="1623.9" y1="268.7" x2="1623.9" y2="275.7" stroke="#686868" stroke-width="1.5" />
<line x1="1623.9" y1="940.0" x2="1623.9" y2="947.0" stroke="#686868" stroke-width="1.5" />
<line x1="1763.7" y1="268.7" x2="1763.7" y2="275.7" stroke="#686868" stroke-width="1.5" />
<line x1="1763.7" y1="940.0" x2="1763.7" y2="947.0" stroke="#686868" stroke-width="1.5" />
<line x1="1903.5" y1="268.7" x2="1903.5" y2="275.7" stroke="#686868" stroke-width="1.5" />
<line x1="1903.5" y1="940.0" x2="1903.5" y2="947.0" stroke="#686868" stroke-width="1.5" />
<line x1="491.4" y1="320.9" x2="498.4" y2="320.9" stroke="#686868" stroke-width="1.5" />
<line x1="1911.0" y1="320.9" x2="1918.0" y2="320.9" stroke="#686868" stroke-width="1.5" />
<line x1="491.4" y1="393.8" x2="498.4" y2="393.8" stroke="#686868" stroke-width="1.5" />
<line x1="1911.0" y1="393.8" x2="1918.0" y2="393.8" stroke="#686868" stroke-width="1.5" />
<line x1="491.4" y1="466.8" x2="498.4" y2="466.8" stroke="#686868" stroke-width="1.5" />
<line x1="1911.0" y1="466.8" x2="1918.0" y2="466.8" stroke="#686868" stroke-width="1.5" />
<line x1="491.4" y1="539.8" x2="498.4" y2="539.8" stroke="#686868" stroke-width="1.5" />
<line x1="1911.0" y1="539.8" x2="1918.0" y2="539.8" stroke="#686868" stroke-width="1.5" />
<line x1="491.4" y1="612.7" x2="498.4" y2="612.7" stroke="#686868" stroke-width="1.5" />
<line x1="1911.0" y1="612.7" x2="1918.0" y2="612.7" stroke="#686868" stroke-width="1.5" />
<line x1="491.4" y1="685.6" x2="498.4" y2="685.6" stroke="#686868" stroke-width="1.5" />
<line x1="1911.0" y1="685.6" x2="1918.0" y2="685.6" stroke="#686868" stroke-width="1.5" />
<line x1="491.4" y1="758.6" x2="498.4" y2="758.6" stroke="#686868" stroke-width="1.5" />
<line x1="1911.0" y1="758.6" x2="1918.0" y2="758.6" stroke="#686868" stroke-width="1.5" />
<line x1="491.4" y1="831.5" x2="498.4" y2="831.5" stroke="#686868" stroke-width="1.5" />
<line x1="1911.0" y1="831.5" x2="1918.0" y2="831.5" stroke="#686868" stroke-width="1.5" />
<line x1="491.4" y1="904.5" x2="498.4" y2="904.5" stroke="#686868" stroke-width="1.5" />
<line x1="1911.0" y1="904.5" x2="1918.0" y2="904.5" stroke="#686868" stroke-width="1.5" />
<text x="435.65" y="326.5" font-size="16" fill="#111111" textLength="50.22" lengthAdjust="spacingAndGlyphs" >46600</text>
<text x="435.65" y="399.4" font-size="16" fill="#111111" textLength="50.22" lengthAdjust="spacingAndGlyphs" >46550</text>
<text x="435.65" y="472.4" font-size="16" fill="#111111" textLength="50.22" lengthAdjust="spacingAndGlyphs" >46500</text>
<text x="435.65" y="545.4" font-size="16" fill="#111111" textLength="50.22" lengthAdjust="spacingAndGlyphs" >46450</text>
<text x="435.65" y="618.3" font-size="16" fill="#111111" textLength="50.22" lengthAdjust="spacingAndGlyphs" >46400</text>
<text x="435.65" y="691.2" font-size="16" fill="#111111" textLength="50.22" lengthAdjust="spacingAndGlyphs" >46350</text>
<text x="435.65" y="764.2" font-size="16" fill="#111111" textLength="50.22" lengthAdjust="spacingAndGlyphs" >46300</text>
<text x="435.65" y="837.1" font-size="16" fill="#111111" textLength="50.22" lengthAdjust="spacingAndGlyphs" >46250</text>
<text x="435.65" y="910.1" font-size="16" fill="#111111" textLength="50.22" lengthAdjust="spacingAndGlyphs" >46200</text>
<text x="501.16" y="967.5" font-size="16" fill="#111111" textLength="10.29" lengthAdjust="spacingAndGlyphs" >0</text>
<text x="635.48" y="967.5" font-size="16" fill="#111111" textLength="20.58" lengthAdjust="spacingAndGlyphs" >10</text>
<text x="775.79" y="967.5" font-size="16" fill="#111111" textLength="20.08" lengthAdjust="spacingAndGlyphs" >20</text>
<text x="915.84" y="967.5" font-size="16" fill="#111111" textLength="19.83" lengthAdjust="spacingAndGlyphs" >30</text>
<text x="1055.89" y="967.5" font-size="16" fill="#111111" textLength="19.6" lengthAdjust="spacingAndGlyphs" >40</text>
<text x="1195.48" y="967.5" font-size="16" fill="#111111" textLength="19.83" lengthAdjust="spacingAndGlyphs" >50</text>
<text x="1335.07" y="967.5" font-size="16" fill="#111111" textLength="20.08" lengthAdjust="spacingAndGlyphs" >60</text>
<text x="1474.89" y="967.5" font-size="16" fill="#111111" textLength="20.08" lengthAdjust="spacingAndGlyphs" >70</text>
<text x="1614.83" y="967.5" font-size="16" fill="#111111" textLength="19.95" lengthAdjust="spacingAndGlyphs" >80</text>
<text x="1754.65" y="967.5" font-size="16" fill="#111111" textLength="19.95" lengthAdjust="spacingAndGlyphs" >90</text>
<text x="1889.04" y="967.5" font-size="16" fill="#111111" textLength="30.23" lengthAdjust="spacingAndGlyphs" >100</text>
<text x="1149.88" y="984.5" font-size="15" fill="#111111" textLength="111.27" lengthAdjust="spacingAndGlyphs" >Arc length (m)</text>
<text x="1096.93" y="248.4" font-size="15" fill="#111111" textLength="215.68" lengthAdjust="spacingAndGlyphs" >Mag Flux Density Norm (nT)</text>
<text x="0" y="0" font-size="15" fill="#111111" textLength="214.67" lengthAdjust="spacingAndGlyphs" transform="translate(416.7,714.67) rotate(-90)">Mag Flux Density Norm (nT)</text>
<rect x="1556.1" y="288.3" width="342.3" height="85" fill="#5a5a5a" />
<rect x="1559.6" y="285.6" width="341.3" height="83.6" fill="#ffffff" stroke="#333333" stroke-width="1.3" />
<line x1="1568.2" y1="302.2" x2="1601.4" y2="302.2" stroke="#2136ee" stroke-width="1.4" />
<text x="1608.13" y="307.2" font-size="15" fill="#111111" textLength="283.3" lengthAdjust="spacingAndGlyphs" >Mag Flux Density Norm: Parallel 12in</text>
<line x1="1568.2" y1="327.34999999999997" x2="1601.4" y2="327.34999999999997" stroke="#33b744" stroke-width="1.4" />
<text x="1608.13" y="332.35" font-size="15" fill="#111111" textLength="283.3" lengthAdjust="spacingAndGlyphs" >Mag Flux Density Norm: Parallel 24in</text>
<line x1="1568.2" y1="352.5" x2="1601.4" y2="352.5" stroke="#e03a3e" stroke-width="1.4" />
<text x="1608.13" y="357.5" font-size="15" fill="#111111" textLength="283.3" lengthAdjust="spacingAndGlyphs" >Mag Flux Density Norm: Parallel 36in</text>
</svg>
</body></html>
